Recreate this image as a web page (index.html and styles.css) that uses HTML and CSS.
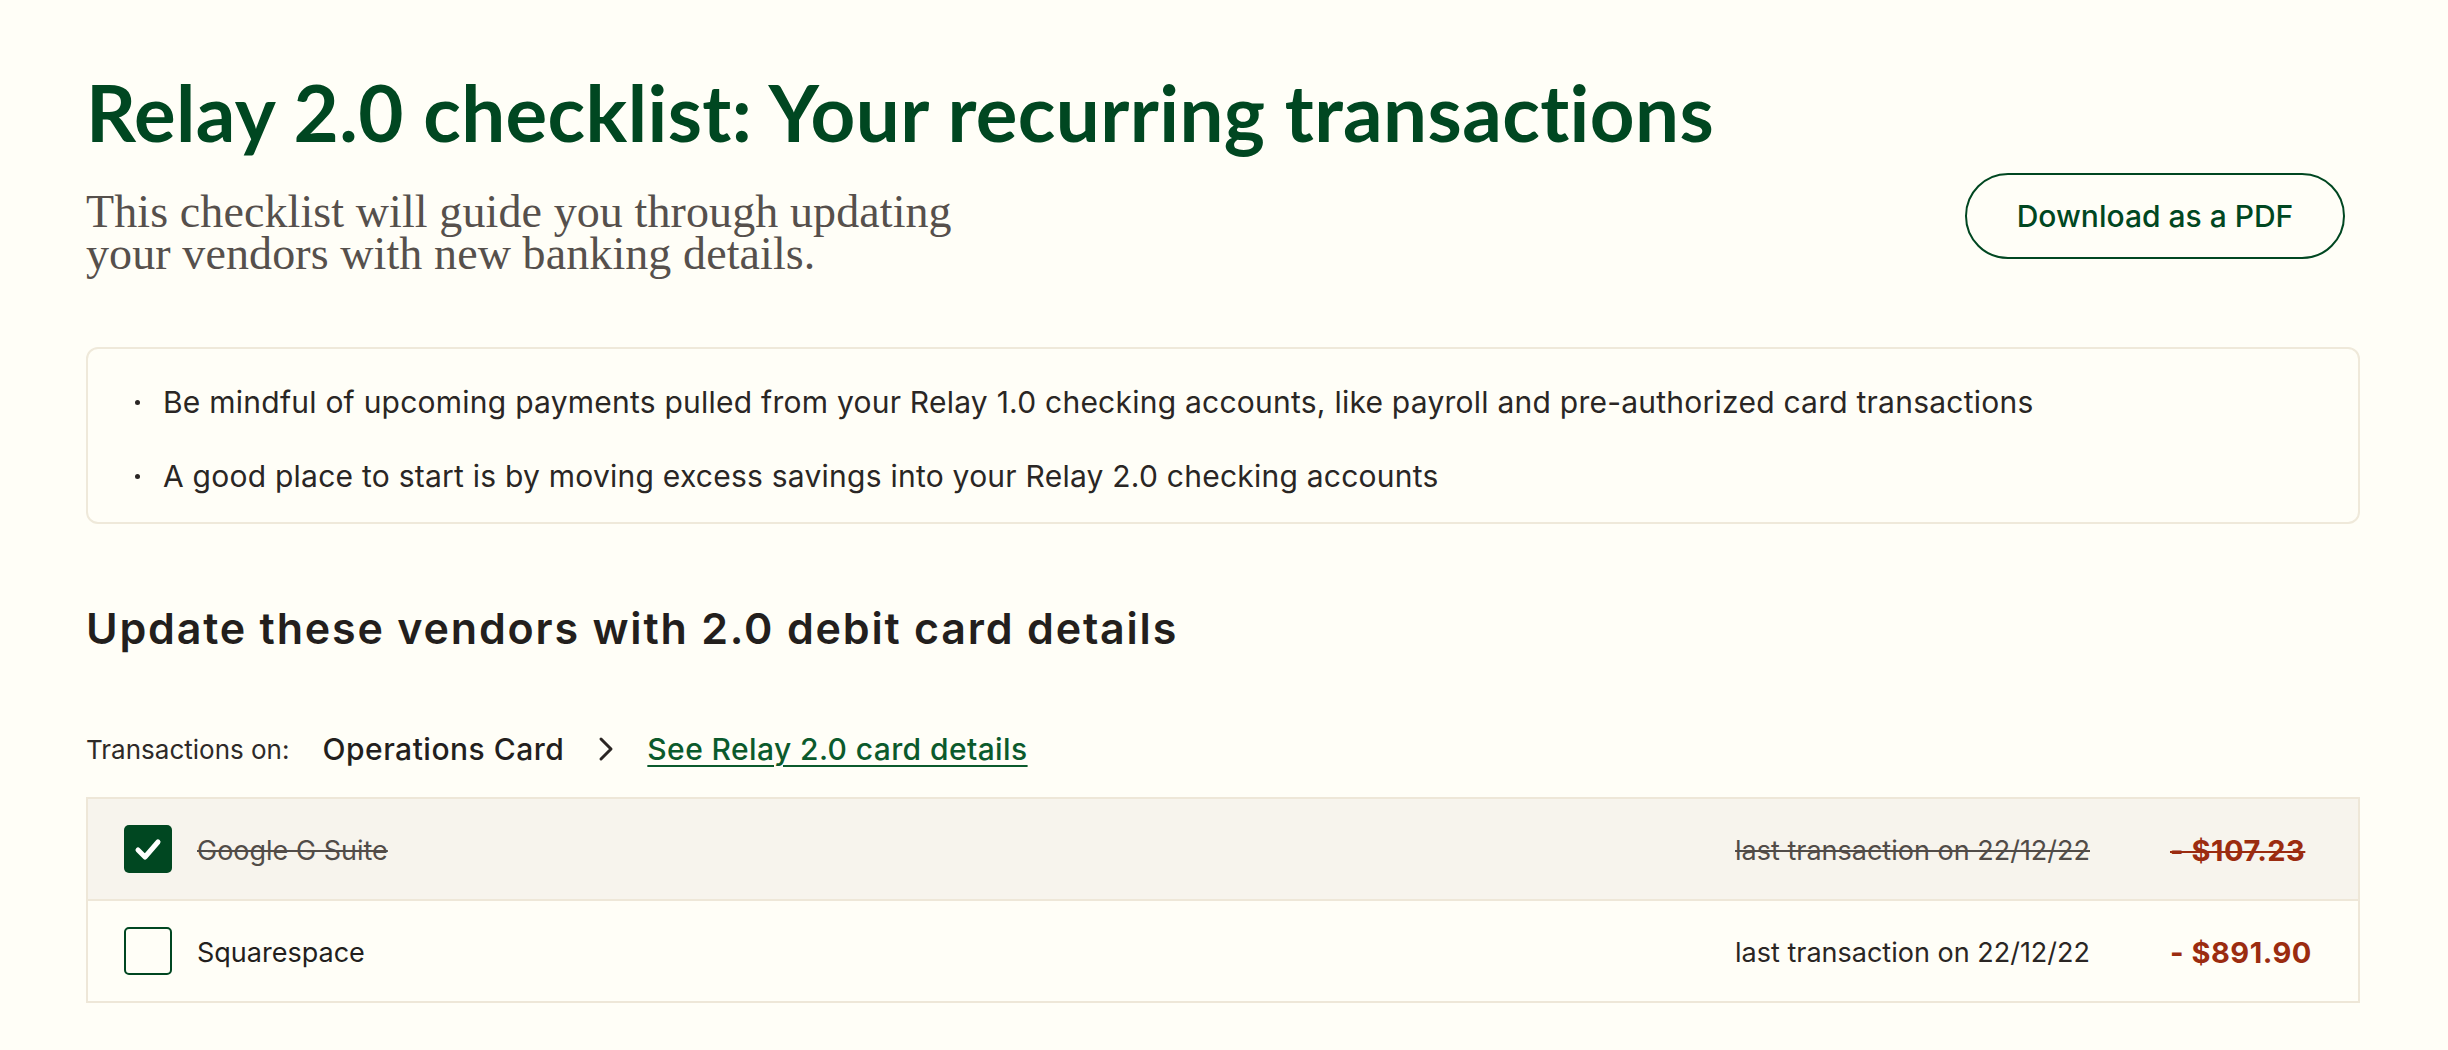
FILE: index.html
```html
<!DOCTYPE html>
<html lang="en">
<head>
<meta charset="UTF-8" />
<title>Relay 2.0 checklist</title>
<link rel="stylesheet" href="styles.css">
</head>
<body>
<main class="page">
  <h1 class="title">Relay 2.0 checklist: Your recurring transactions</h1>

  <div class="intro">
    <p class="lead">This checklist will guide you through updating your vendors with new banking details.</p>
    <a class="btn-outline" href="#">Download as a PDF</a>
  </div>

  <ul class="notes">
    <li>Be mindful of upcoming payments pulled from your Relay 1.0 checking accounts, like payroll and pre-authorized card transactions</li>
    <li>A good place to start is by moving excess savings into your Relay 2.0 checking accounts</li>
  </ul>

  <h2 class="section-title">Update these vendors with 2.0 debit card details</h2>

  <div class="card-bar">
    <span class="card-label">Transactions on:</span>
    <span class="card-name">Operations Card</span>
    <svg class="chevron" width="16" height="26" viewBox="0 0 16 26" aria-hidden="true">
      <polyline points="3,3 13,13 3,23" fill="none" stroke="#2b2624" stroke-width="3" stroke-linecap="round" stroke-linejoin="round" />
    </svg>
    <a class="card-link" href="#">See Relay 2.0 card details</a>
  </div>

  <div class="vendors">
    <div class="vendor done">
      <span class="check checked">
        <svg width="48" height="48" viewBox="0 0 48 48" aria-hidden="true">
          <polyline points="14,25 21,32 34,17" fill="none" stroke="#fff" stroke-width="5" stroke-linecap="round" stroke-linejoin="round" />
        </svg>
      </span>
      <span class="vendor-name">Google G Suite</span>
      <span class="vendor-date">last transaction on 22/12/22</span>
      <span class="vendor-amount">- $107.23</span>
    </div>
    <div class="vendor">
      <span class="check"></span>
      <span class="vendor-name">Squarespace</span>
      <span class="vendor-date">last transaction on 22/12/22</span>
      <span class="vendor-amount">- $891.90</span>
    </div>
  </div>
</main>
</body>
</html>
```

FILE: styles.css
```css
/* base */
body {
  margin: 0;
  background: #fffef7;
  color: #2a2624;
  font-family: Inter, Roboto, "Liberation Sans", sans-serif;
}
.page {
  padding: 69px 88px 40px 86px;
}

/* header */
.title {
  margin: 0;
  font-family: Lato, "Liberation Sans", sans-serif;
  font-weight: 700;
  font-size: 78px;
  line-height: 86px;
  color: #004721;
  letter-spacing: 0.4px;
}
.intro {
  display: flex;
  justify-content: space-between;
  align-items: flex-start;
  margin-top: 18px;
}
.lead {
  margin: 18px 0 0;
  max-width: 920px;
  font-family: "Liberation Serif", serif;
  font-size: 46px;
  line-height: 42px;
  letter-spacing: 0.1px;
  color: #56504c;
}
.btn-outline {
  display: flex;
  align-items: center;
  justify-content: center;
  box-sizing: border-box;
  width: 380px;
  height: 86px;
  margin-right: 15px;
  border: 2px solid #004721;
  border-radius: 43px;
  font-size: 30px;
  font-weight: 500;
  color: #004721;
  text-decoration: none;
}

/* notes box */
.notes {
  list-style: none;
  margin: 72px 0 0;
  padding: 33px 0 26px 47px;
  border: 2px solid #efe9da;
  border-radius: 12px;
}
.notes li {
  display: flex;
  align-items: center;
  gap: 23px;
  font-size: 30px;
  line-height: 40px;
  letter-spacing: 0.24px;
  color: #2a2624;
}
.notes li + li {
  margin-top: 34px;
}
.notes li::before {
  content: "";
  flex: none;
  width: 5px;
  height: 5px;
  border-radius: 50%;
  background: #2a2624;
}

/* vendors */
.section-title {
  margin: 79px 0 0;
  font-size: 43px;
  line-height: 50px;
  font-weight: 600;
  letter-spacing: 1.8px;
  color: #231f1d;
}
.card-bar {
  display: flex;
  align-items: center;
  margin-top: 76px;
  height: 40px;
}
.card-label {
  font-size: 26px;
  color: #2e2a28;
  margin-right: 33px;
}
.card-name {
  font-size: 30px;
  font-weight: 500;
  letter-spacing: 0.5px;
  color: #231f1d;
}
.chevron {
  margin: 0 33px 0 34px;
}
.card-link {
  font-size: 30px;
  font-weight: 500;
  letter-spacing: 0.4px;
  color: #0b5a2c;
  text-decoration: underline;
  text-decoration-thickness: 2px;
  text-underline-offset: 5px;
}
.vendors {
  margin-top: 28px;
  border: 2px solid #eee7d8;
}
.vendor {
  display: flex;
  align-items: center;
  height: 100px;
  padding: 0 36px 0 36px;
}
.vendor + .vendor {
  border-top: 2px solid #eee7d8;
}
.vendor.done {
  background: #f7f4ed;
}
.check {
  box-sizing: border-box;
  width: 48px;
  height: 48px;
  border: 2px solid #004721;
  border-radius: 5px;
  flex: none;
}
.check.checked {
  background: #004721;
  border: none;
}
.check svg {
  display: block;
}
.vendor-name {
  flex: 1;
  margin-left: 25px;
  padding-top: 3px;
  font-size: 27px;
  color: #231f1d;
}
.vendor-date {
  padding-top: 3px;
  font-size: 27px;
  color: #2a2624;
}
.vendor-amount {
  flex: none;
  width: 152px;
  margin-left: 80px;
  padding-top: 3px;
  white-space: nowrap;
  font-size: 29px;
  font-weight: 700;
  letter-spacing: 0.5px;
  color: #9b2c10;
}
.done .vendor-name,
.done .vendor-date,
.done .vendor-amount {
  text-decoration: line-through;
  text-decoration-thickness: 2px;
}
.done .vendor-name,
.done .vendor-date {
  color: #524c48;
}
```
